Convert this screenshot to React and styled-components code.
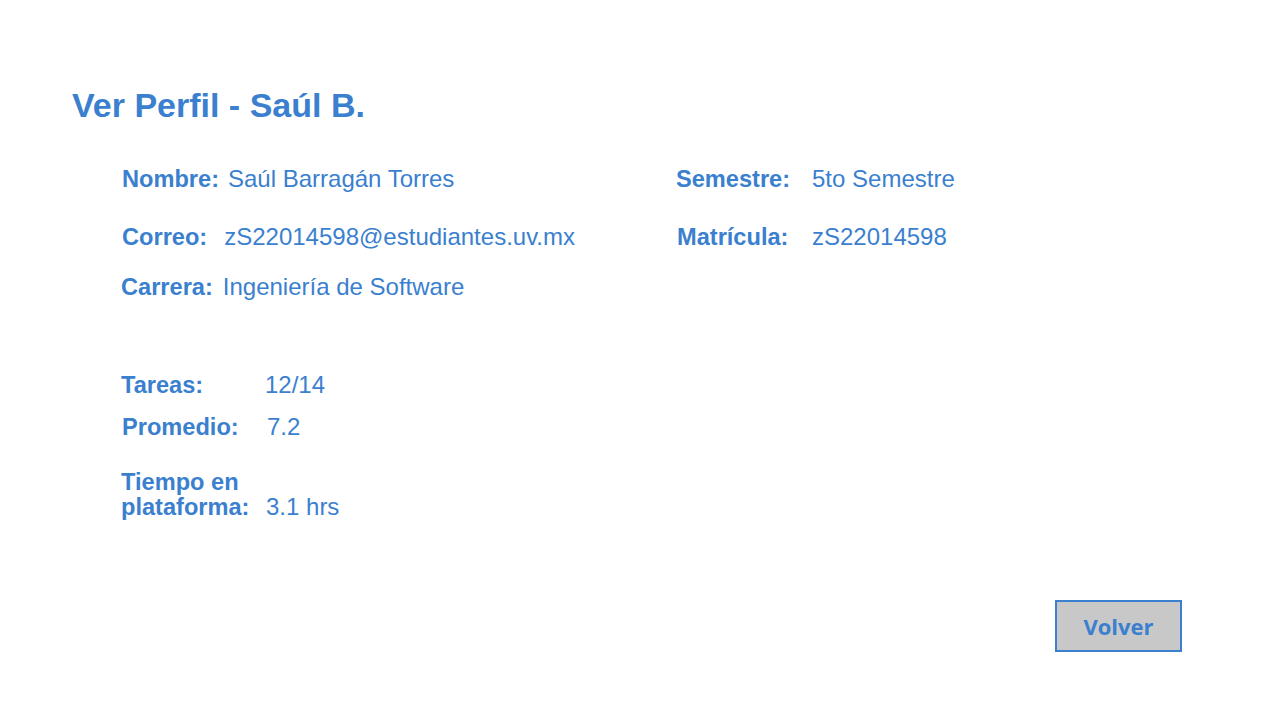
import React from "react";
import styled, { createGlobalStyle } from "styled-components";

const Global = createGlobalStyle`
  html, body { margin: 0; padding: 0; background: #ffffff; }
  body { font-family: "Liberation Sans", Arial, sans-serif; color: #3b7fcf; }
`;

const blue = "#3b7fcf";

const Page = styled.div`
  width: 1280px;
  height: 720px;
  box-sizing: border-box;
  padding: 88px 98px 0 72px;
  display: flex;
  flex-direction: column;
`;

const Title = styled.h1`
  margin: 0;
  font-size: 34px;
  line-height: 34px;
  font-weight: 700;
  color: ${blue};
`;

const InfoGrid = styled.div`
  display: grid;
  grid-template-columns: 554px 1fr;
  margin-top: 43px;
  padding-left: 50px;
`;

const Column = styled.div`
  display: flex;
  flex-direction: column;
`;

const Row = styled.div`
  display: flex;
  align-items: baseline;
  gap: ${(p) => p.$gap ?? 10}px;
  margin-top: ${(p) => p.$mt ?? 0}px;
  margin-left: ${(p) => p.$ml ?? 0}px;
  font-size: 24px;
  line-height: 28px;
`;

const Label = styled.span`
  font-weight: 700;
  font-size: 23.6px;
  color: ${blue};
  ${(p) => (p.$w ? `width: ${p.$w}px; flex: none;` : "")}
`;

const Value = styled.span`
  font-weight: 400;
  font-size: 24px;
  color: ${blue};
`;

const Stats = styled.div`
  display: flex;
  flex-direction: column;
  margin-top: 71px;
  padding-left: 49px;
`;

const StatRow = styled.div`
  display: grid;
  grid-template-columns: ${(p) => p.$lw ?? 144}px 1fr;
  align-items: last baseline;
  margin-top: ${(p) => p.$mt ?? 0}px;
  margin-left: ${(p) => p.$ml ?? 0}px;
  line-height: 25px;
`;

const StatLabel = styled.span`
  font-weight: 700;
  font-size: 23.6px;
  color: ${blue};
  width: 134px;
`;

const Footer = styled.div`
  display: flex;
  justify-content: flex-end;
  margin-top: 80px;
`;

const Button = styled.button`
  width: 127px;
  height: 52px;
  box-sizing: border-box;
  background: #c8c8c8;
  border: 2px solid ${blue};
  border-radius: 0;
  font-family: "Open Sans", "Noto Sans", sans-serif;
  font-weight: 700;
  font-size: 22px;
  color: ${blue};
  padding: 0;
  cursor: pointer;
`;

export default function App() {
  return (
    <>
      <Global />
      <Page>
        <Title>Ver Perfil - Saúl B.</Title>
        <InfoGrid>
          <Column>
            <Row $gap={9}>
              <Label>Nombre:</Label>
              <Value>Saúl Barragán Torres</Value>
            </Row>
            <Row $gap={17} $mt={30}>
              <Label>Correo:</Label>
              <Value>zS22014598@estudiantes.uv.mx</Value>
            </Row>
            <Row $gap={10} $mt={22} $ml={-1}>
              <Label>Carrera:</Label>
              <Value>Ingeniería de Software</Value>
            </Row>
          </Column>
          <Column>
            <Row $gap={0}>
              <Label $w={136}>Semestre:</Label>
              <Value>5to Semestre</Value>
            </Row>
            <Row $gap={0} $mt={30} $ml={1}>
              <Label $w={135}>Matrícula:</Label>
              <Value>zS22014598</Value>
            </Row>
          </Column>
        </InfoGrid>
        <Stats>
          <StatRow $lw={144}>
            <StatLabel>Tareas:</StatLabel>
            <Value>12/14</Value>
          </StatRow>
          <StatRow $lw={145} $mt={16} $ml={1}>
            <StatLabel>Promedio:</StatLabel>
            <Value>7.2</Value>
          </StatRow>
          <StatRow $lw={145} $mt={30}>
            <StatLabel>Tiempo en plataforma:</StatLabel>
            <Value>3.1 hrs</Value>
          </StatRow>
        </Stats>
        <Footer>
          <Button>Volver</Button>
        </Footer>
      </Page>
    </>
  );
}
